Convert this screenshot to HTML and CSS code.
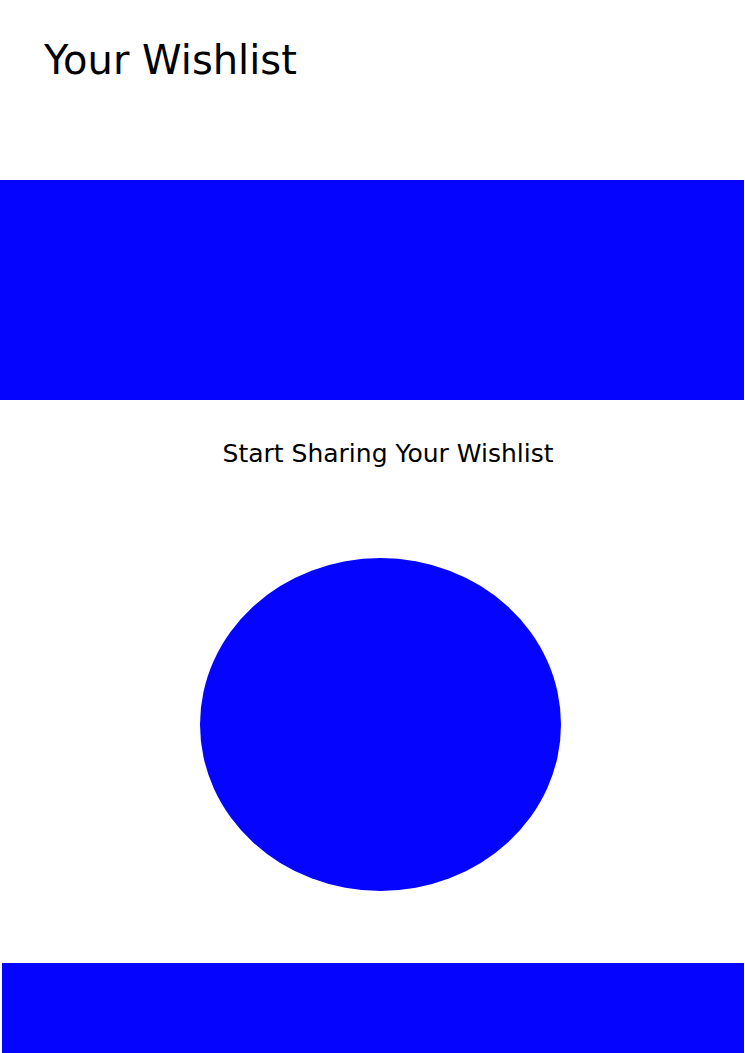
FILE: index.html
```html
<!DOCTYPE html>
<html>
<head>
<meta charset="utf-8">
<link rel="stylesheet" href="styles.css">
</head>
<body>
<div class="page">
  <header class="header">
    <h1 class="title">Your Wishlist</h1>
  </header>
  <div class="banner"></div>
  <p class="subtitle">Start Sharing Your Wishlist</p>
  <div class="circle-row"><div class="circle"></div></div>
  <div class="footer-bar"></div>
</div>
</body>
</html>
```
FILE: styles.css
```css
html, body {
  margin: 0;
  padding: 0;
  background: #ffffff;
}
.page {
  display: flex;
  flex-direction: column;
  width: 745px;
  height: 1053px;
  overflow: hidden;
  font-family: "DejaVu Sans", sans-serif;
  color: #000;
}
.page > * {
  flex-shrink: 0;
}
.header {
  height: 180px;
  padding: 36px 0 0 44px;
  box-sizing: border-box;
}
.title {
  margin: 0;
  font-size: 40px;
  font-weight: normal;
  line-height: 48px;
}
.banner {
  width: 744px;
  height: 220px;
  background: #0505ff;
}
.subtitle {
  margin: 40px 0 0 31px;
  font-size: 25px;
  line-height: 28px;
  text-align: center;
}
.circle-row {
  margin-top: 90px;
  padding-left: 200px;
}
.circle {
  width: 361px;
  height: 333px;
  border-radius: 50%;
  background: #0505ff;
}
.footer-bar {
  margin: 72px 0 0 2px;
  width: 742px;
  height: 100px;
  background: #0505ff;
}
```
